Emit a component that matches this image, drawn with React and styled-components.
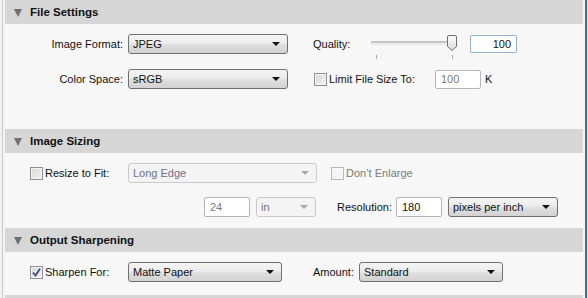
import React from 'react';
import styled, { createGlobalStyle, css } from 'styled-components';

const GlobalStyle = createGlobalStyle`
  html, body {
    margin: 0;
    padding: 0;
    background: #f7f7f7;
  }
  body {
    font-family: "Liberation Sans", Arial, sans-serif;
    font-size: 11px;
    color: #000;
  }
`;

const Frame = styled.div`
  display: flex;
  width: 588px;
  height: 298px;
  overflow: hidden;
`;

const LeftEdge = styled.div`
  width: 5px;
  flex: none;
  background: linear-gradient(to right, #f2f2f2 0 2px, #c9c9c9 2px 3px, #f4f4f4 3px 5px);
`;

const RightEdge = styled.div`
  width: 5px;
  flex: none;
  background: linear-gradient(to right, #f4f4f4 0 2px, #3f6c9c 2px 4px, #dce9f6 4px 5px);
`;

const Panel = styled.div`
  width: 578px;
  flex: none;
  background: #f7f7f7;
  display: flex;
  flex-direction: column;
`;

const Header = styled.div`
  height: 24px;
  flex: none;
  display: flex;
  align-items: center;
  background: #d6d6d6;
  font-weight: bold;
  font-size: 11.5px;
  color: #111;
`;

const Twisty = styled.span`
  width: 0;
  height: 0;
  margin: 1px 8px 0 9px;
  border-left: 4.5px solid transparent;
  border-right: 4.5px solid transparent;
  border-top: 8px solid #707070;
`;

const Body = styled.div`
  height: ${({ h }) => h}px;
  flex: none;
  box-sizing: border-box;
  padding-top: 10px;
  display: flex;
  flex-direction: column;
  gap: ${({ gap }) => gap || 0}px;
`;

const Row = styled.div`
  display: flex;
  align-items: center;
  height: 20px;
`;

const Label = styled.span`
  flex: none;
  width: ${({ w }) => w}px;
  text-align: ${({ right }) => (right ? 'right' : 'left')};
  margin-left: ${({ ml }) => ml || 0}px;
  color: ${({ disabled }) => (disabled ? '#7a7a7a' : '#111')};
  white-space: nowrap;
`;

const Spacer = styled.span`
  flex: none;
  width: ${({ w }) => w}px;
`;

const SelectBox = styled.div`
  flex: none;
  box-sizing: border-box;
  width: ${({ w }) => w}px;
  height: ${({ h }) => h || 20}px;
  margin-left: ${({ ml }) => ml || 0}px;
  display: flex;
  align-items: center;
  justify-content: space-between;
  padding: 0 7px 0 4px;
  border-radius: 3px;
  ${({ disabled }) =>
    disabled
      ? css`
          border: 1px solid #cacaca;
          background: #f4f4f4;
          color: #6f6f8c;
        `
      : css`
          border: 1px solid #707070;
          background: linear-gradient(#f4f4f4, #ececec 45%, #dedede 55%, #d2d2d2);
          color: #111;
        `}
`;

const Arrow = styled.span`
  width: 0;
  height: 0;
  border-left: 4px solid transparent;
  border-right: 4px solid transparent;
  border-top: 4px solid ${({ disabled }) => (disabled ? '#a8a8a8' : '#111')};
`;

const Field = styled.div`
  flex: none;
  box-sizing: border-box;
  width: ${({ w }) => w}px;
  height: ${({ h }) => h || 19}px;
  margin-left: ${({ ml }) => ml || 0}px;
  display: flex;
  align-items: center;
  justify-content: ${({ right }) => (right ? 'flex-end' : 'flex-start')};
  padding: 0 5px;
  background: #fff;
  border-radius: 2px;
  border: 1px solid ${({ focus }) => (focus ? '#8fb4d9' : '#b5b5b5')};
  color: ${({ disabled }) => (disabled ? '#7a7a7a' : '#111')};
`;

const Check = styled.span`
  flex: none;
  box-sizing: border-box;
  width: 13px;
  height: 13px;
  margin-left: ${({ ml }) => ml || 0}px;
  margin-right: 2px;
  display: flex;
  align-items: center;
  justify-content: center;
  border: 1px solid ${({ disabled }) => (disabled ? '#b8b8b8' : '#8e8f8f')};
  background: ${({ disabled }) =>
    disabled ? '#f4f4f4' : 'linear-gradient(135deg, #d8d8d8, #f2f2f2)'};
  box-shadow: inset 0 0 0 1px ${({ disabled }) => (disabled ? '#f7f7f7' : '#f4f4f4')};
`;

const SliderWrap = styled.div`
  position: relative;
  flex: none;
  width: 90px;
  height: 20px;
  margin-left: ${({ ml }) => ml || 0}px;
`;

const Track = styled.div`
  position: absolute;
  left: 0;
  right: 6px;
  top: 7px;
  height: 2px;
  background: #c4c4c4;
  border-bottom: 1px solid #f0f0f0;
  box-shadow: 0 1px 0 #e4e4e4;
`;

const Tick = styled.div`
  position: absolute;
  top: 21px;
  left: ${({ x }) => x}px;
  width: 1px;
  height: 4px;
  background: #a8a8a8;
`;

const Thumb = styled.svg`
  position: absolute;
  left: 75px;
  top: 1px;
`;

function Select({ w, ml, h, disabled, children }) {
  return (
    <SelectBox w={w} ml={ml} h={h} disabled={disabled}>
      <span>{children}</span>
      <Arrow disabled={disabled} />
    </SelectBox>
  );
}

function Checkbox({ ml, disabled, checked }) {
  return (
    <Check ml={ml} disabled={disabled}>
      {checked && (
        <svg width="9" height="9" viewBox="0 0 9 9">
          <path d="M1 4.5 L3.5 7.5 L8 0.8" fill="none" stroke="#3d4f80" strokeWidth="1.8" />
        </svg>
      )}
    </Check>
  );
}

function Section({ title }) {
  return (
    <Header>
      <Twisty />
      {title}
    </Header>
  );
}

export default function App() {
  return (
    <>
      <GlobalStyle />
      <Frame>
        <LeftEdge />
        <Panel>
          <Section title="File Settings" />
          <Body h={105} gap={15}>
            <Row>
              <Label w={118} right>Image Format:</Label>
              <Select w={160} ml={5}>JPEG</Select>
              <Label w={58} ml={25}>Quality:</Label>
              <SliderWrap>
                <Track />
                <Tick x={5} />
                <Tick x={81} />
                <Thumb width="12" height="16" viewBox="0 0 12 16">
                  <defs>
                    <linearGradient id="th" x1="0" x2="0" y1="0" y2="1">
                      <stop offset="0" stopColor="#fbfbfb" />
                      <stop offset="1" stopColor="#dcdcdc" />
                    </linearGradient>
                  </defs>
                  <path d="M1.5 2 Q1.5 0.5 3 0.5 H9 Q10.5 0.5 10.5 2 V11.5 L6 15.5 L1.5 11.5 Z" fill="url(#th)" stroke="#707070" />
                </Thumb>
              </SliderWrap>
              <Field w={47} ml={9} h={18} right focus>100</Field>
            </Row>
            <Row>
              <Label w={118} right>Color Space:</Label>
              <Select w={160} ml={5}>sRGB</Select>
              <Checkbox ml={26} />
              <Label w={106}>Limit File Size To:</Label>
              <Field w={46} disabled>100</Field>
              <Label w={20} ml={4}>K</Label>
            </Row>
          </Body>
          <Section title="Image Sizing" />
          <Body h={75} gap={14}>
            <Row>
              <Checkbox ml={25} />
              <Label w={81}>Resize to Fit:</Label>
              <Select w={189} ml={2} disabled>Long Edge</Select>
              <Checkbox ml={14} disabled />
              <Label w={100} disabled>Don’t Enlarge</Label>
            </Row>
            <Row>
              <Spacer w={199} />
              <Field w={46} h={20} disabled>24</Field>
              <Select w={60} h={20} ml={6} disabled>in</Select>
              <Label w={55} ml={21}>Resolution:</Label>
              <Field w={46} h={20} ml={4}>180</Field>
              <Select w={110} h={20} ml={6}>pixels per inch</Select>
            </Row>
          </Body>
          <Section title="Output Sharpening" />
          <Body h={43}>
            <Row>
              <Checkbox ml={25} checked />
              <Label w={81}>Sharpen For:</Label>
              <Select w={154} ml={2}>Matte Paper</Select>
              <Label w={46} ml={31}>Amount:</Label>
              <Select w={144}>Standard</Select>
            </Row>
          </Body>
          <Section title="" />
        </Panel>
        <RightEdge />
      </Frame>
    </>
  );
}
